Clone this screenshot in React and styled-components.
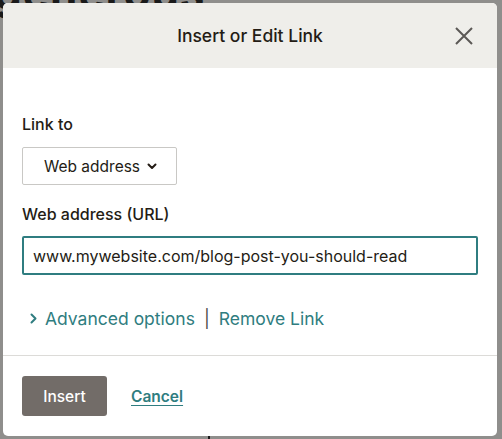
import React from 'react';
import styled, { createGlobalStyle } from 'styled-components';

const GlobalStyle = createGlobalStyle`
  html, body {
    margin: 0;
    padding: 0;
    background: #8f8e8c;
  }
  * {
    box-sizing: border-box;
  }
`;

const ChevronDown = () => (
  <svg width="10" height="7" viewBox="0 0 10 7" fill="none">
    <path d="M1.5 1.5L5 5L8.5 1.5" stroke="#241c15" strokeWidth="2" strokeLinecap="round" strokeLinejoin="round" />
  </svg>
);

const ChevronRight = () => (
  <svg width="7" height="11" viewBox="0 0 7 11" fill="none">
    <path d="M1.5 1.5L5.5 5.5L1.5 9.5" stroke="#2f7d80" strokeWidth="2" strokeLinecap="round" strokeLinejoin="round" />
  </svg>
);

const CloseIcon = () => (
  <svg width="18" height="18" viewBox="0 0 18 18" fill="none">
    <path d="M1 1L17 17M17 1L1 17" stroke="#5b5855" strokeWidth="2" />
  </svg>
);

const LinkDialog = () => {
  return (
    <Page>
      <GlobalStyle />
      <Backdrop>
        <BackdropTitle aria-hidden="true">generous</BackdropTitle>
        <BackdropRule />
      </Backdrop>
      <Modal role="dialog" aria-label="Insert or Edit Link">
        <Header>
          <Title>Insert or Edit Link</Title>
          <CloseButton type="button" aria-label="Close">
            <CloseIcon />
          </CloseButton>
        </Header>
        <Body>
          <Label>Link to</Label>
          <Select type="button">
            Web address
            <ChevronDown />
          </Select>
          <Label $gap={19}>Web address (URL)</Label>
          <UrlInput defaultValue="www.mywebsite.com/blog-post-you-should-read" />
          <LinkRow>
            <TextLink>
              <ChevronRight />
              Advanced options
            </TextLink>
            <Pipe>|</Pipe>
            <TextLink>Remove Link</TextLink>
          </LinkRow>
        </Body>
        <Footer>
          <PrimaryButton type="button">Insert</PrimaryButton>
          <CancelLink href="#">Cancel</CancelLink>
        </Footer>
      </Modal>
    </Page>
  );
};

const Page = styled.div`
  position: relative;
  width: 502px;
  height: 439px;
  overflow: hidden;
  background: #8f8e8c;
  font-family: Inter, 'Liberation Sans', sans-serif;
`;

const Backdrop = styled.div`
  height: 100%;
`;

const BackdropTitle = styled.div`
  margin-top: -34px;
  margin-left: -6px;
  font-size: 44px;
  font-weight: 700;
  color: #1a1a1a;
  letter-spacing: 1px;
`;

const BackdropRule = styled.div`
  margin: 360px 0 0 208px;
  width: 2px;
  height: 60px;
  background: #1a1a1a;
`;

const Modal = styled.div`
  position: absolute;
  top: 3px;
  left: 3px;
  width: 494px;
  height: 433px;
  background: #ffffff;
  border-radius: 5px;
  overflow: hidden;
  display: flex;
  flex-direction: column;
  color: #241c15;
`;

const Header = styled.div`
  position: relative;
  height: 65px;
  flex-shrink: 0;
  background: #efeeea;
  display: flex;
  align-items: center;
  justify-content: center;
`;

const Title = styled.h2`
  margin: 0;
  font-size: 17.5px;
  font-weight: 500;
  color: #241c15;
`;

const CloseButton = styled.button`
  position: absolute;
  right: 24px;
  top: 24px;
  padding: 0;
  border: 0;
  background: none;
  display: flex;
  cursor: pointer;
`;

const Body = styled.div`
  padding: 46px 19px 25px;
  display: flex;
  flex-direction: column;
  align-items: flex-start;
  border-bottom: 1px solid #dcdbd8;
`;

const Label = styled.label`
  margin-top: ${(p) => p.$gap || 0}px;
  font-size: 16px;
  line-height: 20px;
  font-weight: 500;
  color: #241c15;
`;

const Select = styled.button`
  margin-top: 13px;
  width: 155px;
  height: 38px;
  padding: 0 19px 0 21px;
  display: flex;
  align-items: center;
  justify-content: space-between;
  background: #fff;
  border: 1px solid #c9c8c5;
  border-radius: 2px;
  font-family: inherit;
  font-size: 15.5px;
  color: #241c15;
`;

const UrlInput = styled.input`
  margin-top: 12px;
  width: 456px;
  height: 39px;
  padding: 0 9px;
  border: 2px solid #2f7d80;
  border-radius: 2px;
  font-family: inherit;
  font-size: 16px;
  color: #241c15;
  outline: none;
`;

const LinkRow = styled.div`
  margin-top: 31px;
  padding-left: 8px;
  height: 24px;
  display: flex;
  align-items: center;
  gap: 9px;
  font-size: 17.5px;
`;

const TextLink = styled.a`
  display: flex;
  align-items: center;
  gap: 8px;
  color: #2f7d80;
  cursor: pointer;
`;

const Pipe = styled.span`
  color: #4a4a4a;
`;

const Footer = styled.div`
  padding: 20px 19px;
  display: flex;
  align-items: center;
  gap: 24px;
`;

const PrimaryButton = styled.button`
  width: 85px;
  height: 40px;
  border: 0;
  border-radius: 3px;
  background: #726c68;
  color: #fff;
  font-family: inherit;
  font-size: 15.5px;
  font-weight: 500;
`;

const CancelLink = styled.a`
  color: #2f7d80;
  font-size: 15.5px;
  font-weight: 600;
  text-decoration: underline;
  text-underline-offset: 3px;
`;

export default LinkDialog;
